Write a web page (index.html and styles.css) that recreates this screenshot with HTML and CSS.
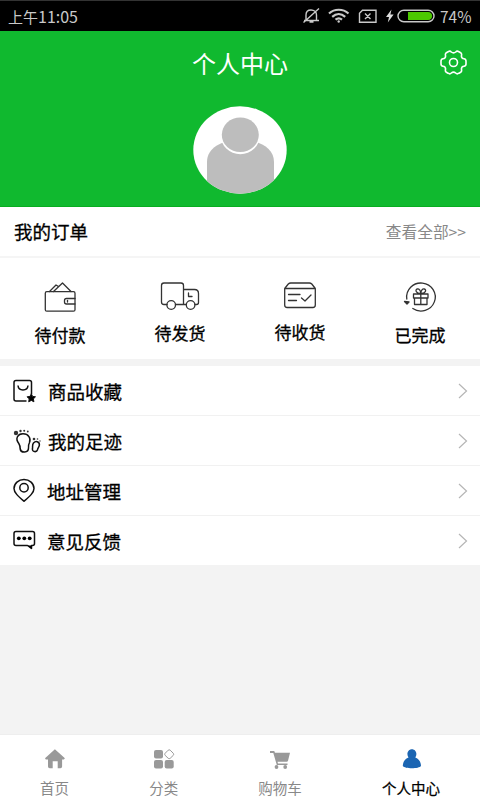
FILE: index.html
```html
<!DOCTYPE html>
<html lang="zh-CN">
<head>
<meta charset="utf-8">
<title>个人中心</title>
<link rel="stylesheet" href="styles.css">
</head>
<body>
<div class="status">
  <span class="time">上午<b>11:05</b></span>
  <svg width="136" height="20" viewBox="302 6 136 20" fill="none" stroke="#c9c9c9" stroke-width="1.4">
    <path d="M304 20.5h15M306 20v-5c0-3 2-5 5-5s5.500 2 5.500 5v5M309.500 22h4M303.500 22.500l15.500-14"/>
    <g stroke-width="2.200"><path d="M329 13.500c5.500-5 14-5 19.500 0M332.200 16.800c4-3.500 9-3.500 13 0M335.500 19.700c2-1.700 4.500-1.700 6.500 0"/></g>
    <circle cx="338.700" cy="21.500" r="1.200" fill="#c9c9c9" stroke="none"/>
    <path d="M362.500 10.200H376v12H359.500v-9zM365 13.500l5.500 5.500M370.500 13.500l-5.500 5.500"/>
    <path d="M391.500 9.500l-5.500 7.500h3l-1.200 5.500 5.800-8h-3.200z" fill="#ddd" stroke="none"/>
    <rect x="398" y="10.200" width="36" height="11.600" rx="5.800"/>
    <path d="M408 12h20c5.500 0 5.500 8 0 8h-20z" fill="#4cc800" stroke="none"/>
  </svg>
  <span class="percent">74%</span>
</div>
<header class="hero">
  <h1>个人中心</h1>
  <svg class="gear" width="28" height="26" viewBox="439 50 28 26" fill="none" stroke="#fff" stroke-width="1.600" stroke-linejoin="round">
    <path d="M448 51.800Q450 50.500 451.300 52Q453.500 53.800 455.700 52Q457 50.500 459 51.800L461 53Q462 54 461.400 56Q461.500 58.500 464 58.700Q466 59 466 61V64Q466 66 464 66.200Q461.500 66.500 461.400 69Q462 71 461 72L459 73.200Q457 74.500 455.700 73Q453.500 71.200 451.300 73Q450 74.500 448 73.200L446 72Q445 71 445.600 69Q445.500 66.500 443 66.200Q441 66 441 64V61Q441 59 443 58.700Q445.500 58.500 445.600 56Q445 54 446 53Z"/>
    <circle cx="453.500" cy="62.500" r="4"/>
  </svg>
  <svg class="avatar" width="94" height="88" viewBox="193 106 94 88">
    <defs><clipPath id="face"><ellipse cx="240" cy="150" rx="46.700" ry="43.700"/></clipPath></defs>
    <g clip-path="url(#face)">
      <path d="M193 106h94v88h-94z" fill="#fff"/>
      <path d="M207 196v-34c0-14 14-22 33.500-22S274 148 274 162v34z" fill="#bdbdbd"/>
      <ellipse cx="240.300" cy="135" rx="19.800" ry="19.200" fill="#fff"/>
      <ellipse cx="240.300" cy="134.800" rx="18.500" ry="17.300" fill="#bdbdbd"/>
    </g>
  </svg>
</header>
<section class="order-head"><h2>我的订单</h2><span>查看全部&gt;&gt;</span></section>
<section class="orders">
  <div class="order">
    <svg width="34" height="34" viewBox="43 281 34 34"><rect x="45.300" y="291.700" width="29.700" height="19.500" rx="1.500"/><path d="M75 298.500h-8.500q-2 0-2 2v1.500q0 2 2 2H75M49.500 291.500l6.500-6.500 2.500 1.500M53.500 291.500l9-8.500 8.500 8.500"/><path d="M67.500 300.500v1.500"/></svg>
    <span>待付款</span>
  </div>
  <div class="order up1">
    <svg width="40" height="34" viewBox="160 281 40 34"><path d="M167 304.500h-3q-2.500 0-2.500-2.500v-16.500q0-2.500 2.500-2.500h17q2.500 0 2.500 2.500v19M175.500 304.500h10.500M183.500 289.500h11q4 0 4 4v9q0 2-2 2h-1.500M188.500 293v3.500h3.500"/><circle cx="171.200" cy="305" r="4.300"/><circle cx="190.600" cy="305" r="4.300"/></svg>
    <span>待发货</span>
  </div>
  <div class="order up2">
    <svg width="34" height="34" viewBox="283 281 34 34"><path d="M284.700 288.500h30.600v16.500q0 2.500-2.500 2.500h-25.600q-2.500 0-2.500-2.500zM284.700 288.500l3.600-4.500q1-1 2.500-1h18.500q1.500 0 2.500 1l3.500 4.500M288.500 294.500h11.500M288.500 300.500h8M301.500 298l3.500 3 6-6"/></svg>
    <span>待收货</span>
  </div>
  <div class="order">
    <svg width="36" height="34" viewBox="402 281 36 34"><path d="M406.800 299a14.300 14 0 1 1 6 9.500"/><path d="M404.500 301.500l4.500.5-2 2z" fill="#333"/><path d="M413.500 294h14.500v4h-14.500zM414.500 298v6.500h12.500V298M420.800 294v10.500M420.800 293.500c-5 0-6-4-3.500-4.500 2-.3 3.500 2 3.500 4.500 0-2.500 1.500-4.800 3.500-4.500 2.500.5 1.500 4.500-3.500 4.500"/></svg>
    <span>已完成</span>
  </div>
</section>
<ul class="menu">
  <li><svg class="icon" width="34" height="30" viewBox="10 376 34 30"><path d="M26.500 401H16q-2 0-2-2v-16.500q0-2 2-2h13.500q2 0 2 2V394M18 385.500c.5 6 9.500 6 10 0"/><path d="M31.300 393.700l1.300 2.700 2.900.4-2.100 2.100.5 2.900-2.600-1.400-2.600 1.400.5-2.900-2.100-2.100 2.900-.4z" fill="#000" stroke-width="1"/></svg><span>商品收藏</span><svg class="arrow" width="10" height="16" viewBox="0 0 10 16"><path d="M1 1l7.500 7L1 15"/></svg></li>
  <li><svg class="icon" width="34" height="30" viewBox="10 426 34 30"><path d="M18.800 443.500c-4-5-1-9.700 4.200-9.700 5.500 0 8.200 4.500 6.500 8.700-1 2-1.500 3.500-1 5.500 0 5-7.500 5.500-8.300 1 0-2.500-.2-3.700-1.400-5.500zM33.500 443c3-3 6.500-.5 5.800 2.500-.5 2-1.500 2.300-1.800 4.200-.8 3-5.800 2.300-5-1.200.3-2-.5-3.500 1-5.500z"/><g fill="#333" stroke="none"><circle cx="16" cy="433" r="2.200"/><circle cx="20.500" cy="431" r="1.200"/><circle cx="24.200" cy="430.800" r="1"/><circle cx="27.800" cy="431.500" r=".9"/><circle cx="34" cy="439" r="1.300"/><circle cx="37.500" cy="439" r=".8"/><circle cx="40" cy="441" r=".7"/></g></svg><span>我的足迹</span><svg class="arrow" width="10" height="16" viewBox="0 0 10 16"><path d="M1 1l7.500 7L1 15"/></svg></li>
  <li><svg class="icon" width="34" height="30" viewBox="10 476 34 30"><path d="M24 501.300c-6-5.300-10-8.800-10-12.800a10 9 0 0 1 20 0c0 4-4 7.500-10 12.800z"/><circle cx="24" cy="487.700" r="4.200"/></svg><span class="m3">地址管理</span><svg class="arrow" width="10" height="16" viewBox="0 0 10 16"><path d="M1 1l7.500 7L1 15"/></svg></li>
  <li><svg class="icon" width="34" height="30" viewBox="10 526 34 30"><path d="M16 531.500h16.500q2 0 2 2v10q0 2-2 2H31.500v3l-4-3H16q-2 0-2-2v-10q0-2 2-2z"/><path d="M27.500 545.500h4v3.500z" fill="#000" stroke="none"/><g fill="#000" stroke="none"><circle cx="18.800" cy="538.300" r="1.900"/><circle cx="24.300" cy="538.300" r="1.900"/><circle cx="29.700" cy="538.300" r="1.900"/></g></svg><span class="m3">意见反馈</span><svg class="arrow" width="10" height="16" viewBox="0 0 10 16"><path d="M1 1l7.500 7L1 15"/></svg></li>
</ul>
<nav class="tabs">
  <a class="tab"><svg width="22" height="22" viewBox="44 748 22 22"><path d="M54.900 749.300l10 9-1 1.200h-1.800v7q0 1.700-1.700 1.700h-2.700v-7h-5v7h-3q-1.700 0-1.700-1.700v-7h-2.200l-.8-1.200z"/></svg><span>首页</span></a>
  <a class="tab"><svg width="22" height="22" viewBox="153 748 22 22"><rect x="154" y="750" width="9" height="8.500" rx="2"/><rect x="154" y="760" width="9" height="8.500" rx="2"/><rect x="164.700" y="760" width="9" height="8.500" rx="2"/><path d="M168.200 750.200q1-.8 2 0l3.100 3.100q.8 1 0 2l-3.100 3q-1 .8-2 0l-3.100-3q-.8-1 0-2z" fill="none" stroke="#999" stroke-width="1"/></svg><span>分类</span></a>
  <a class="tab"><svg width="22" height="22" viewBox="270 748 22 22"><path d="M271 751h4.200l.8 1.800h15l-2 8q-.3 1-1.300 1h-9.200l.5 1.700h9.500v1.500h-10.700L274.300 753H271z"/><circle cx="277.500" cy="767" r="1.900"/><circle cx="286.200" cy="767" r="1.900"/></svg><span>购物车</span></a>
  <a class="tab active"><svg width="22" height="22" viewBox="400 748 22 22"><path d="M408.500 757.500c-2.500-3.500-.5-8.300 3.400-8.300s5.900 4.800 3.400 8.300c3.500 1.300 5.700 4.500 5.700 8.500-2 3-16.200 3-18.200 0 0-4 2.200-7.200 5.700-8.500z"/></svg><span>个人中心</span></a>
</nav>
</body>
</html>
```
FILE: styles.css
```css
* { box-sizing: border-box; }
body {
  margin: 0;
  width: 480px;
  height: 800px;
  display: flex;
  flex-direction: column;
  background: #f3f3f3;
  font-family: "Noto Sans CJK SC", sans-serif;
  color: #000;
  overflow: hidden;
}
svg { display: block; flex: none; }
h1, h2, ul { margin: 0; padding: 0; }
.status {
  height: 31px;
  flex: none;
  background: #000;
  border-top: 1px solid #333;
  color: #c9c9c9;
  display: flex;
  align-items: center;
  padding: 0 8px 0 8px;
  font-size: 15px;
}
.time { flex: 1; line-height: 30px; }
.time b { font-weight: 400; font-size: 16px; }
.percent { width: 32px; margin-left: 2px; font-size: 15.500px; line-height: 30px; white-space: nowrap; }
.hero {
  height: 176px;
  flex: none;
  background: #10b92f;
  border-bottom: 1px solid #08ad20;
  display: grid;
  grid-template-columns: 1fr 94px 1fr;
  grid-template-rows: 75px 88px;
}
.hero h1 {
  grid-column: 1 / 4;
  grid-row: 1;
  text-align: center;
  color: #fff;
  font-size: 24px;
  font-weight: 400;
  line-height: 63px;
}
.gear { grid-column: 3; grid-row: 1; justify-self: end; margin: 19px 13px 0 0; }
.avatar { grid-column: 2; grid-row: 2; }
.order-head {
  height: 51px;
  flex: none;
  display: flex;
  align-items: center;
  justify-content: space-between;
  padding: 0 14px;
  background: #fff;
  border-bottom: 2px solid #f5f5f5;
}
.order-head h2 { font-size: 18.500px; font-weight: 400; -webkit-text-stroke: .3px; padding-bottom: 2px; }
.order-head span { font-size: 15.700px; color: #888; }
.orders {
  height: 101px;
  flex: none;
  display: grid;
  grid-template-columns: repeat(4, 1fr);
  background: #fff;
}
.order { display: flex; flex-direction: column; align-items: center; padding-top: 23px; }
.order svg { fill: none; stroke: #333; stroke-width: 1.300; stroke-linejoin: round; stroke-linecap: round; }
.order span { font-size: 17px; -webkit-text-stroke: .3px; line-height: 24px; margin-top: 8px; }
.up1 span { margin-top: 6px; }
.up2 span { margin-top: 5px; }
.menu { list-style: none; margin-top: 7px; flex: none; background: #fff; }
.menu li {
  height: 50px;
  display: flex;
  align-items: center;
  padding: 0 12px 0 10px;
  border-bottom: 1px solid #f1f1f1;
}
.menu li:last-child { height: 49px; border-bottom: 0; }
.icon { fill: none; stroke: #111; stroke-width: 1.500; stroke-linejoin: round; }
.menu span { flex: 1; margin-left: 4px; font-size: 18.500px; line-height: 26px; -webkit-text-stroke: .3px; }
.menu .m3 { margin-left: 3px; }
.arrow { fill: none; stroke: #b5b5b5; stroke-width: 1.200; }
.tabs {
  margin-top: auto;
  height: 66px;
  flex: none;
  display: flex;
  background: #fff;
  border-top: 1px solid #eee;
}
.tab {
  flex: 1 1 auto;
  display: flex;
  flex-direction: column;
  align-items: center;
  padding-top: 13px;
  color: #888;
  fill: #999;
  font-size: 14.500px;
}
.tab span { line-height: 20px; margin-top: 8px; }
.active { color: #000; fill: #1b65b2; }
.active span { -webkit-text-stroke: .25px; }
```
